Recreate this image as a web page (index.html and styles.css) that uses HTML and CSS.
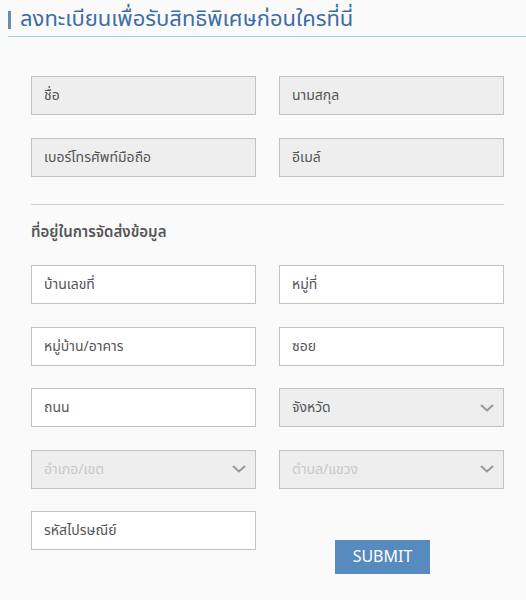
FILE: index.html
```html
<!DOCTYPE html>
<html lang="th">
<head>
<meta charset="utf-8">
<link rel="stylesheet" href="styles.css">
</head>
<body>
<div class="page">
  <h1 class="title">ลงทะเบียนเพื่อรับสิทธิพิเศษก่อนใครที่นี่</h1>
  <form class="form">
    <div class="grid grid-top">
      <div class="field gray">ชื่อ</div>
      <div class="field gray">นามสกุล</div>
      <div class="field gray">เบอร์โทรศัพท์มือถือ</div>
      <div class="field gray">อีเมล์</div>
    </div>
    <hr class="divider">
    <h2 class="section">ที่อยู่ในการจัดส่งข้อมูล</h2>
    <div class="grid grid-addr">
      <div class="field">บ้านเลขที่</div>
      <div class="field">หมู่ที่</div>
      <div class="field">หมู่บ้าน/อาคาร</div>
      <div class="field">ซอย</div>
      <div class="field">ถนน</div>
      <div class="field gray select">จังหวัด<svg class="chev" width="14" height="8" viewBox="0 0 14 8"><path d="M1 1 L7 6.5 L13 1" fill="none" stroke="#999" stroke-width="2"/></svg></div>
      <div class="field gray select disabled">อำเภอ/เขต<svg class="chev" width="14" height="8" viewBox="0 0 14 8"><path d="M1 1 L7 6.5 L13 1" fill="none" stroke="#999" stroke-width="2"/></svg></div>
      <div class="field gray select disabled">ตำบล/แขวง<svg class="chev" width="14" height="8" viewBox="0 0 14 8"><path d="M1 1 L7 6.5 L13 1" fill="none" stroke="#999" stroke-width="2"/></svg></div>
      <div class="field">รหัสไปรษณีย์</div>
      <div class="submit-cell"><button type="button" class="submit">SUBMIT</button></div>
    </div>
  </form>
</div>
</body>
</html>
```
FILE: styles.css
```css
html, body {
  margin: 0;
  padding: 0;
  background: #fafafa;
}
body {
  font-family: "Noto Sans Thai", "Noto Sans", "DejaVu Sans", sans-serif;
  color: #555;
}
.page {
  padding: 11px 0 0 8px;
}
.title {
  margin: 0 0 7px 0;
  font-size: 22px;
  font-weight: normal;
  color: #3b6ea6;
  border-left: 3px solid #6b8fa8;
  padding-left: 9px;
  line-height: 18px;
  height: 18px;
  overflow: visible;
}
.form {
  border-top: 1px solid #a9cde0;
  padding: 39px 22px 0 23px;
}
.grid {
  display: grid;
  grid-template-columns: 225px 225px;
  column-gap: 23px;
}
.grid-top {
  row-gap: 23px;
}
.grid-addr {
  row-gap: 22.5px;
}
.field {
  box-sizing: border-box;
  height: 39px;
  border: 1px solid #c2c2c2;
  background: #fff;
  font-size: 14px;
  color: #555;
  padding: 0 12px;
  display: flex;
  align-items: center;
  justify-content: space-between;
}
.gray {
  background: #eeeeee;
}
.disabled {
  color: #c8c8c8;
}
.chev {
  margin-right: -3px;
}
.divider {
  border: none;
  border-top: 1px solid #cfcfcf;
  margin: 27px 0 0 0;
}
.section {
  margin: 0;
  font-size: 15px;
  font-weight: 600;
  color: #555;
  padding: 17px 0 21px 0;
  line-height: 22px;
  height: 22px;
}
.submit-cell {
  padding: 29px 0 0 56px;
}
.submit {
  width: 95px;
  height: 34px;
  background: #588bbd;
  border: none;
  color: #fff;
  font-family: inherit;
  font-size: 16px;
  padding: 0;
}
```
